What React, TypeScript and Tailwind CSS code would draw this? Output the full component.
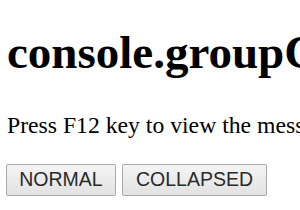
import React from "react";

export default function App() {
  return (
    <div className="w-[300px] h-[210px] overflow-hidden bg-white pl-[6px] text-black whitespace-nowrap" style={{ fontFamily: '"Liberation Serif", "Times New Roman", serif' }}>
      <h1 className="mt-[26px] pl-[1px] text-[47px] font-bold leading-[52px]">console.groupCollapsed()</h1>
      <p className="mt-[34px] pl-[1px] text-[23.7px] leading-[26px]">Press F12 key to view the messages in the console.</p>
      <div className="mt-[26px] flex gap-[6px]">
        <button
          className="w-[110px] h-[32px] flex items-center justify-center border border-[#a9a9a9] bg-gradient-to-b from-[#f4f4f4] to-[#e2e2e2] text-[19.5px] text-[#2a2a2a] rounded-[2px]"
          style={{ fontFamily: '"Liberation Sans", Arial, sans-serif' }}
        >
          NORMAL
        </button>
        <button
          className="w-[145px] h-[32px] flex items-center justify-center border border-[#a9a9a9] bg-gradient-to-b from-[#f4f4f4] to-[#e2e2e2] text-[19.5px] text-[#2a2a2a] rounded-[2px]"
          style={{ fontFamily: '"Liberation Sans", Arial, sans-serif' }}
        >
          COLLAPSED
        </button>
      </div>
    </div>
  );
}
